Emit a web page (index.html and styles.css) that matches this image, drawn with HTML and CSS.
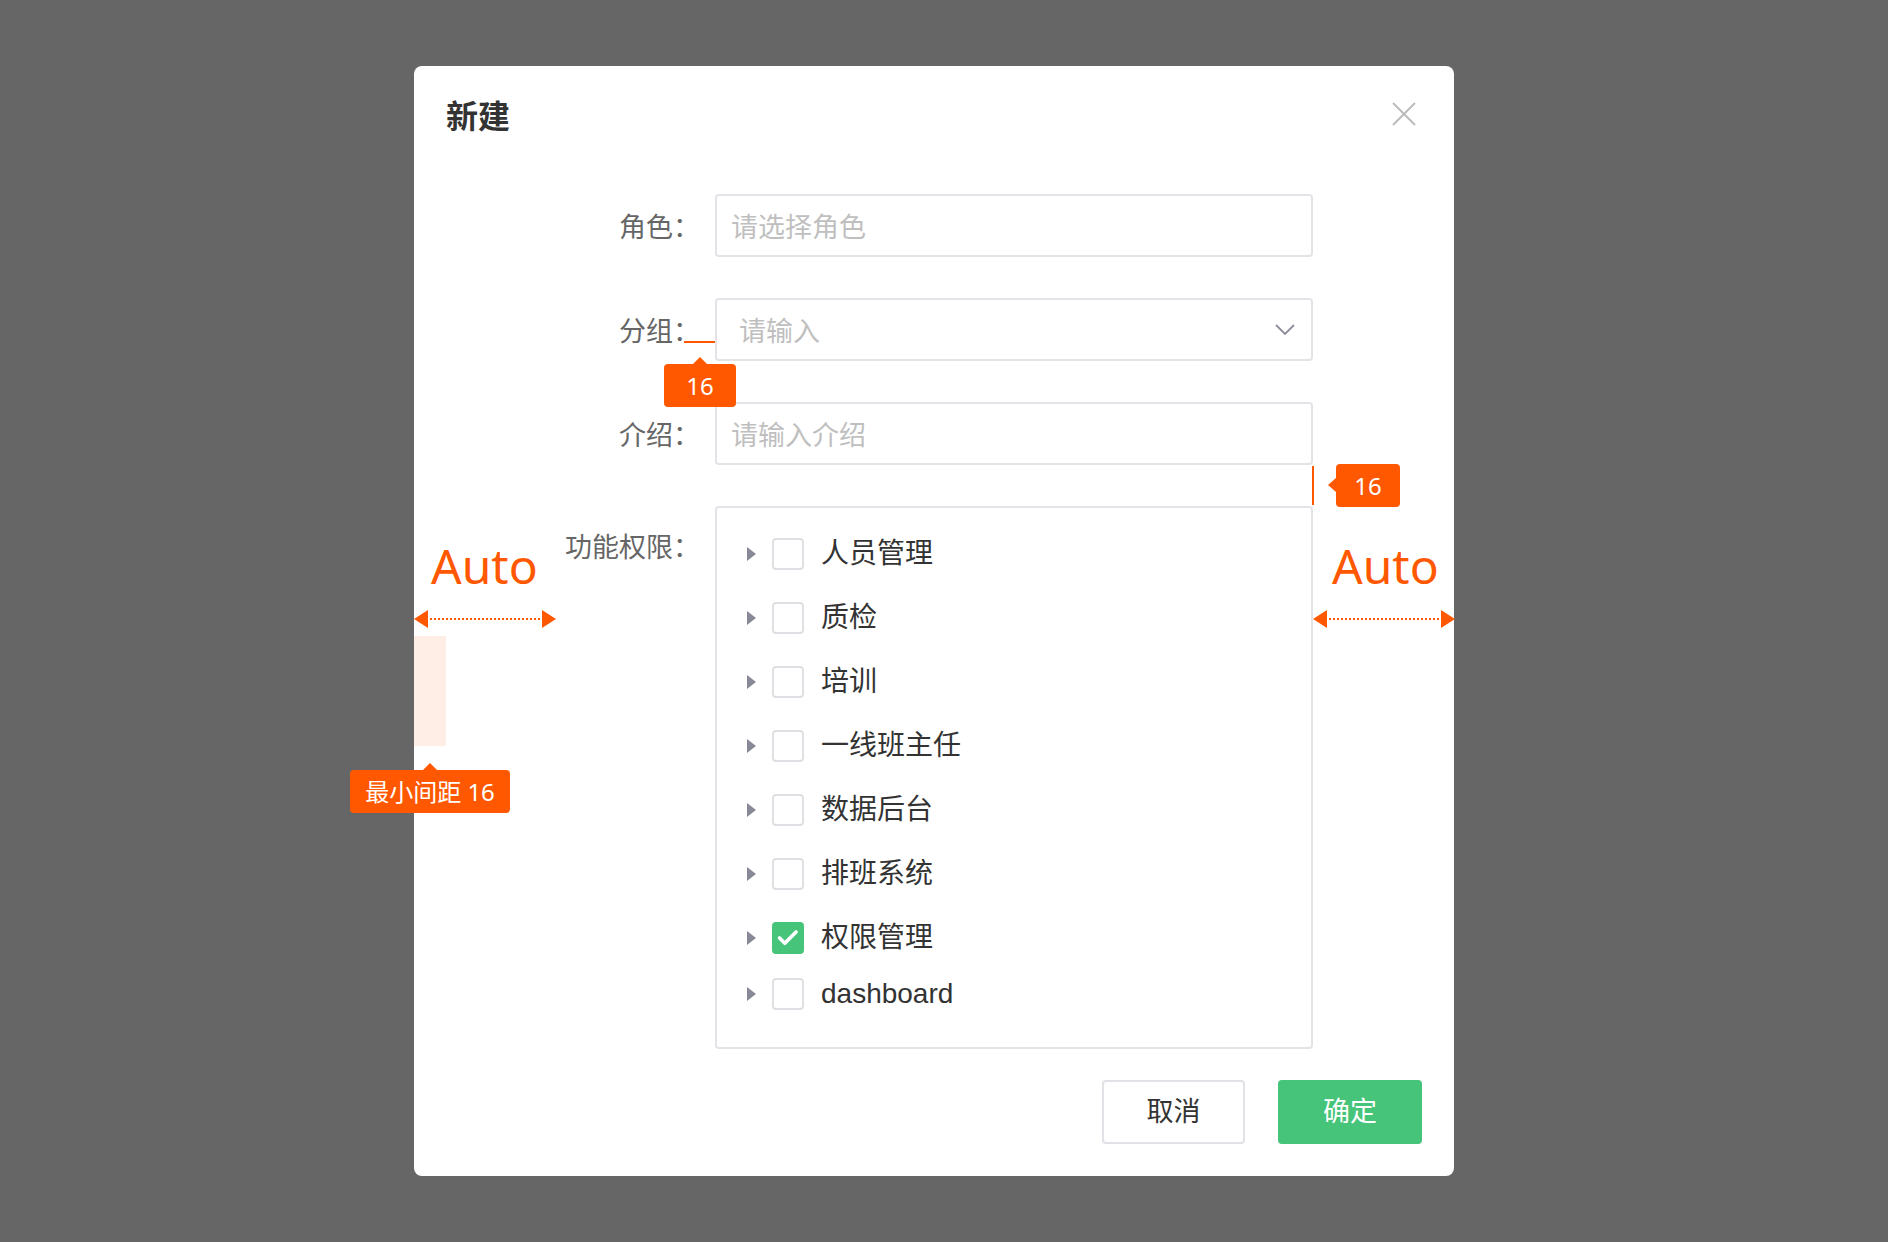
FILE: index.html
```html
<!DOCTYPE html>
<html lang="zh-CN">
<head>
<meta charset="utf-8">
<title>新建</title>
<link rel="stylesheet" href="styles.css">
</head>
<body>
<div class="page">
  <div class="modal">
    <header class="modal-head">
      <h2 class="modal-title">新建</h2>
      <button class="close" type="button" aria-label="关闭">
        <svg width="24" height="24" viewBox="0 0 24 24"><path d="M1 1 L23 23 M23 1 L1 23" stroke="#bcbcbc" stroke-width="2" fill="none"/></svg>
      </button>
    </header>

    <form class="form">
      <label class="label">角色：</label>
      <div class="input"><span class="ph">请选择角色</span></div>

      <label class="label">分组：</label>
      <div class="input input--select">
        <span class="ph">请输入</span>
        <svg class="chevron" width="20" height="11" viewBox="0 0 20 11"><path d="M1 1 L10 10 L19 1" stroke="#8d8e99" stroke-width="1.8" fill="none"/></svg>
      </div>

      <label class="label">介绍：</label>
      <div class="input"><span class="ph">请输入介绍</span></div>

      <label class="label label--top">功能权限：</label>
      <div class="tree">
        <div class="tree-row"><span class="caret"></span><span class="check"></span><span class="tree-label">人员管理</span></div>
        <div class="tree-row"><span class="caret"></span><span class="check"></span><span class="tree-label">质检</span></div>
        <div class="tree-row"><span class="caret"></span><span class="check"></span><span class="tree-label">培训</span></div>
        <div class="tree-row"><span class="caret"></span><span class="check"></span><span class="tree-label">一线班主任</span></div>
        <div class="tree-row"><span class="caret"></span><span class="check"></span><span class="tree-label">数据后台</span></div>
        <div class="tree-row"><span class="caret"></span><span class="check"></span><span class="tree-label">排班系统</span></div>
        <div class="tree-row"><span class="caret"></span><span class="check check--on"><svg width="32" height="32" viewBox="0 0 32 32"><path d="M7.5 16 L12.8 21.3 L24 10" stroke="#fff" stroke-width="3.6" stroke-linecap="round" stroke-linejoin="round" fill="none"/></svg></span><span class="tree-label">权限管理</span></div>
        <div class="tree-row tree-row--last"><span class="caret"></span><span class="check"></span><span class="tree-label">dashboard</span></div>
      </div>
    </form>

    <div class="actions">
      <button class="btn" type="button">取消</button>
      <button class="btn btn--primary" type="button">确定</button>
    </div>

    <!-- spacing annotations -->
    <div class="anno anno-underline"></div>
    <div class="anno tip tip--up tip-gap">16</div>
    <div class="anno anno-vline"></div>
    <div class="anno tip tip--left tip-row">16</div>
    <div class="anno auto auto--left">Auto</div>
    <div class="anno measure measure--left"><span class="head head--l"></span><span class="dots"></span><span class="head head--r"></span></div>
    <div class="anno pad-block"></div>
    <div class="anno tip tip--up tip-min">最小间距 16</div>
    <div class="anno auto auto--right">Auto</div>
    <div class="anno measure measure--right"><span class="head head--l"></span><span class="dots"></span><span class="head head--r"></span></div>
  </div>
</div>
</body>
</html>
```

FILE: styles.css
```css
* { box-sizing: border-box; }

html, body {
  margin: 0;
  padding: 0;
  background: #666666;
}

body {
  font-family: "Liberation Sans", "Noto Sans CJK SC", sans-serif;
  color: #333;
  width: 1888px;
  height: 1242px;
  overflow: hidden;
}

.page {
  padding: 66px 0 0 414px;
}

.modal {
  position: relative;
  width: 1040px;
  background: #fff;
  border-radius: 8px;
  padding-bottom: 32px;
}

.modal-head {
  display: flex;
  align-items: center;
  justify-content: space-between;
  padding: 24px 38px 0 32px;
  height: 72px;
}

.modal-title {
  margin: 0;
  font-family: "Noto Sans CJK SC", sans-serif;
  font-size: 32px;
  font-weight: 600;
  line-height: 48px;
  color: #333;
}

.close {
  border: 0;
  background: none;
  padding: 0;
  width: 24px;
  height: 24px;
  display: flex;
}

.form {
  display: grid;
  grid-template-columns: 1fr 598px;
  row-gap: 41px;
  margin-top: 56px;
  padding-right: 141px;
}

.label {
  font-family: "Noto Sans CJK SC", sans-serif;
  font-size: 27px;
  color: #666;
  text-align: right;
  padding-right: 15px;
  align-self: center;
  line-height: 36px;
}

.label--top {
  align-self: start;
  padding-top: 22px;
}

.input {
  height: 63px;
  border: 2px solid #e3e3e8;
  border-radius: 4px;
  display: flex;
  align-items: center;
  padding: 0 14px;
}

.input--select {
  padding: 0 16px 0 22px;
  justify-content: space-between;
}

.ph {
  font-family: "Noto Sans CJK SC", sans-serif;
  font-size: 27px;
  color: #bfbfbf;
  line-height: 36px;
}

.chevron { display: block; }

.tree {
  height: 543px;
  border: 2px solid #e3e3e8;
  border-radius: 4px;
  padding: 14px 0 0 30px;
}

.tree-row {
  display: flex;
  align-items: center;
  height: 64px;
}

.tree-row--last { height: 48px; }

.caret {
  width: 0;
  height: 0;
  border-left: 9px solid #878a96;
  border-top: 7px solid transparent;
  border-bottom: 7px solid transparent;
  margin-right: 16px;
}

.check {
  width: 32px;
  height: 32px;
  border: 2px solid #e0e0e4;
  border-radius: 4px;
  margin-right: 17px;
  display: flex;
  align-items: center;
  justify-content: center;
  position: relative;
}

.check--on {
  background: #45c47a;
  border-color: #45c47a;
}

.check--on svg {
  position: absolute;
  left: -2px;
  top: -2px;
}

.tree-label {
  font-size: 28px;
  color: #333;
  line-height: 40px;
}

.actions {
  display: flex;
  justify-content: flex-end;
  gap: 33px;
  padding-right: 32px;
  margin-top: 31px;
}

.btn {
  width: 143px;
  height: 64px;
  border: 2px solid #e1e1e6;
  border-radius: 4px;
  background: #fff;
  font-family: "Noto Sans CJK SC", sans-serif;
  font-size: 27px;
  color: #333;
  padding: 0 0 5px;
}

.btn--primary {
  width: 144px;
  background: #45c47a;
  border-color: #45c47a;
  color: #fff;
}

/* annotations */
.anno { position: absolute; }

.anno-underline {
  left: 270px;
  top: 275px;
  width: 31px;
  height: 2px;
  background: #ff5800;
}

.anno-vline {
  left: 898px;
  top: 400px;
  width: 2px;
  height: 39px;
  background: #ff5800;
}

.tip {
  background: #ff5800;
  color: #fff;
  border-radius: 4px;
  height: 43px;
  line-height: 43px;
  text-align: center;
  font-family: "Noto Sans", "Noto Sans CJK SC", sans-serif;
  font-size: 24px;
}

.tip::before {
  content: "";
  position: absolute;
  width: 0;
  height: 0;
}

.tip--up::before {
  top: -7px;
  border-left: 7px solid transparent;
  border-right: 7px solid transparent;
  border-bottom: 7px solid #ff5800;
}

.tip--left::before {
  left: -8px;
  top: 14px;
  border-top: 7px solid transparent;
  border-bottom: 7px solid transparent;
  border-right: 8px solid #ff5800;
}

.tip-gap {
  left: 250px;
  top: 298px;
  width: 72px;
}
.tip-gap::before { left: 29px; }

.tip-row {
  left: 922px;
  top: 398px;
  width: 64px;
}

.tip-min {
  left: -64px;
  top: 704px;
  width: 160px;
}
.tip-min::before { left: 73px; }

.auto {
  font-family: "Noto Sans", sans-serif;
  font-size: 48px;
  line-height: 48px;
  color: #ff5800;
  top: 476px;
}
.auto--left { left: 17px; }
.auto--right { left: 918px; }

.measure {
  top: 544px;
  width: 142px;
  height: 18px;
  display: flex;
  align-items: center;
}
.measure--left { left: 0; }
.measure--right { left: 899px; }

.head {
  width: 0;
  height: 0;
  border-top: 9px solid transparent;
  border-bottom: 9px solid transparent;
}
.head--l { border-right: 14px solid #ff5800; }
.head--r { border-left: 14px solid #ff5800; }

.dots {
  flex: 1;
  height: 0;
  border-top: 2px dotted #ff5800;
  margin: 0 2px;
}

.pad-block {
  left: 0;
  top: 570px;
  width: 32px;
  height: 110px;
  background: #ffeee6;
}
```
